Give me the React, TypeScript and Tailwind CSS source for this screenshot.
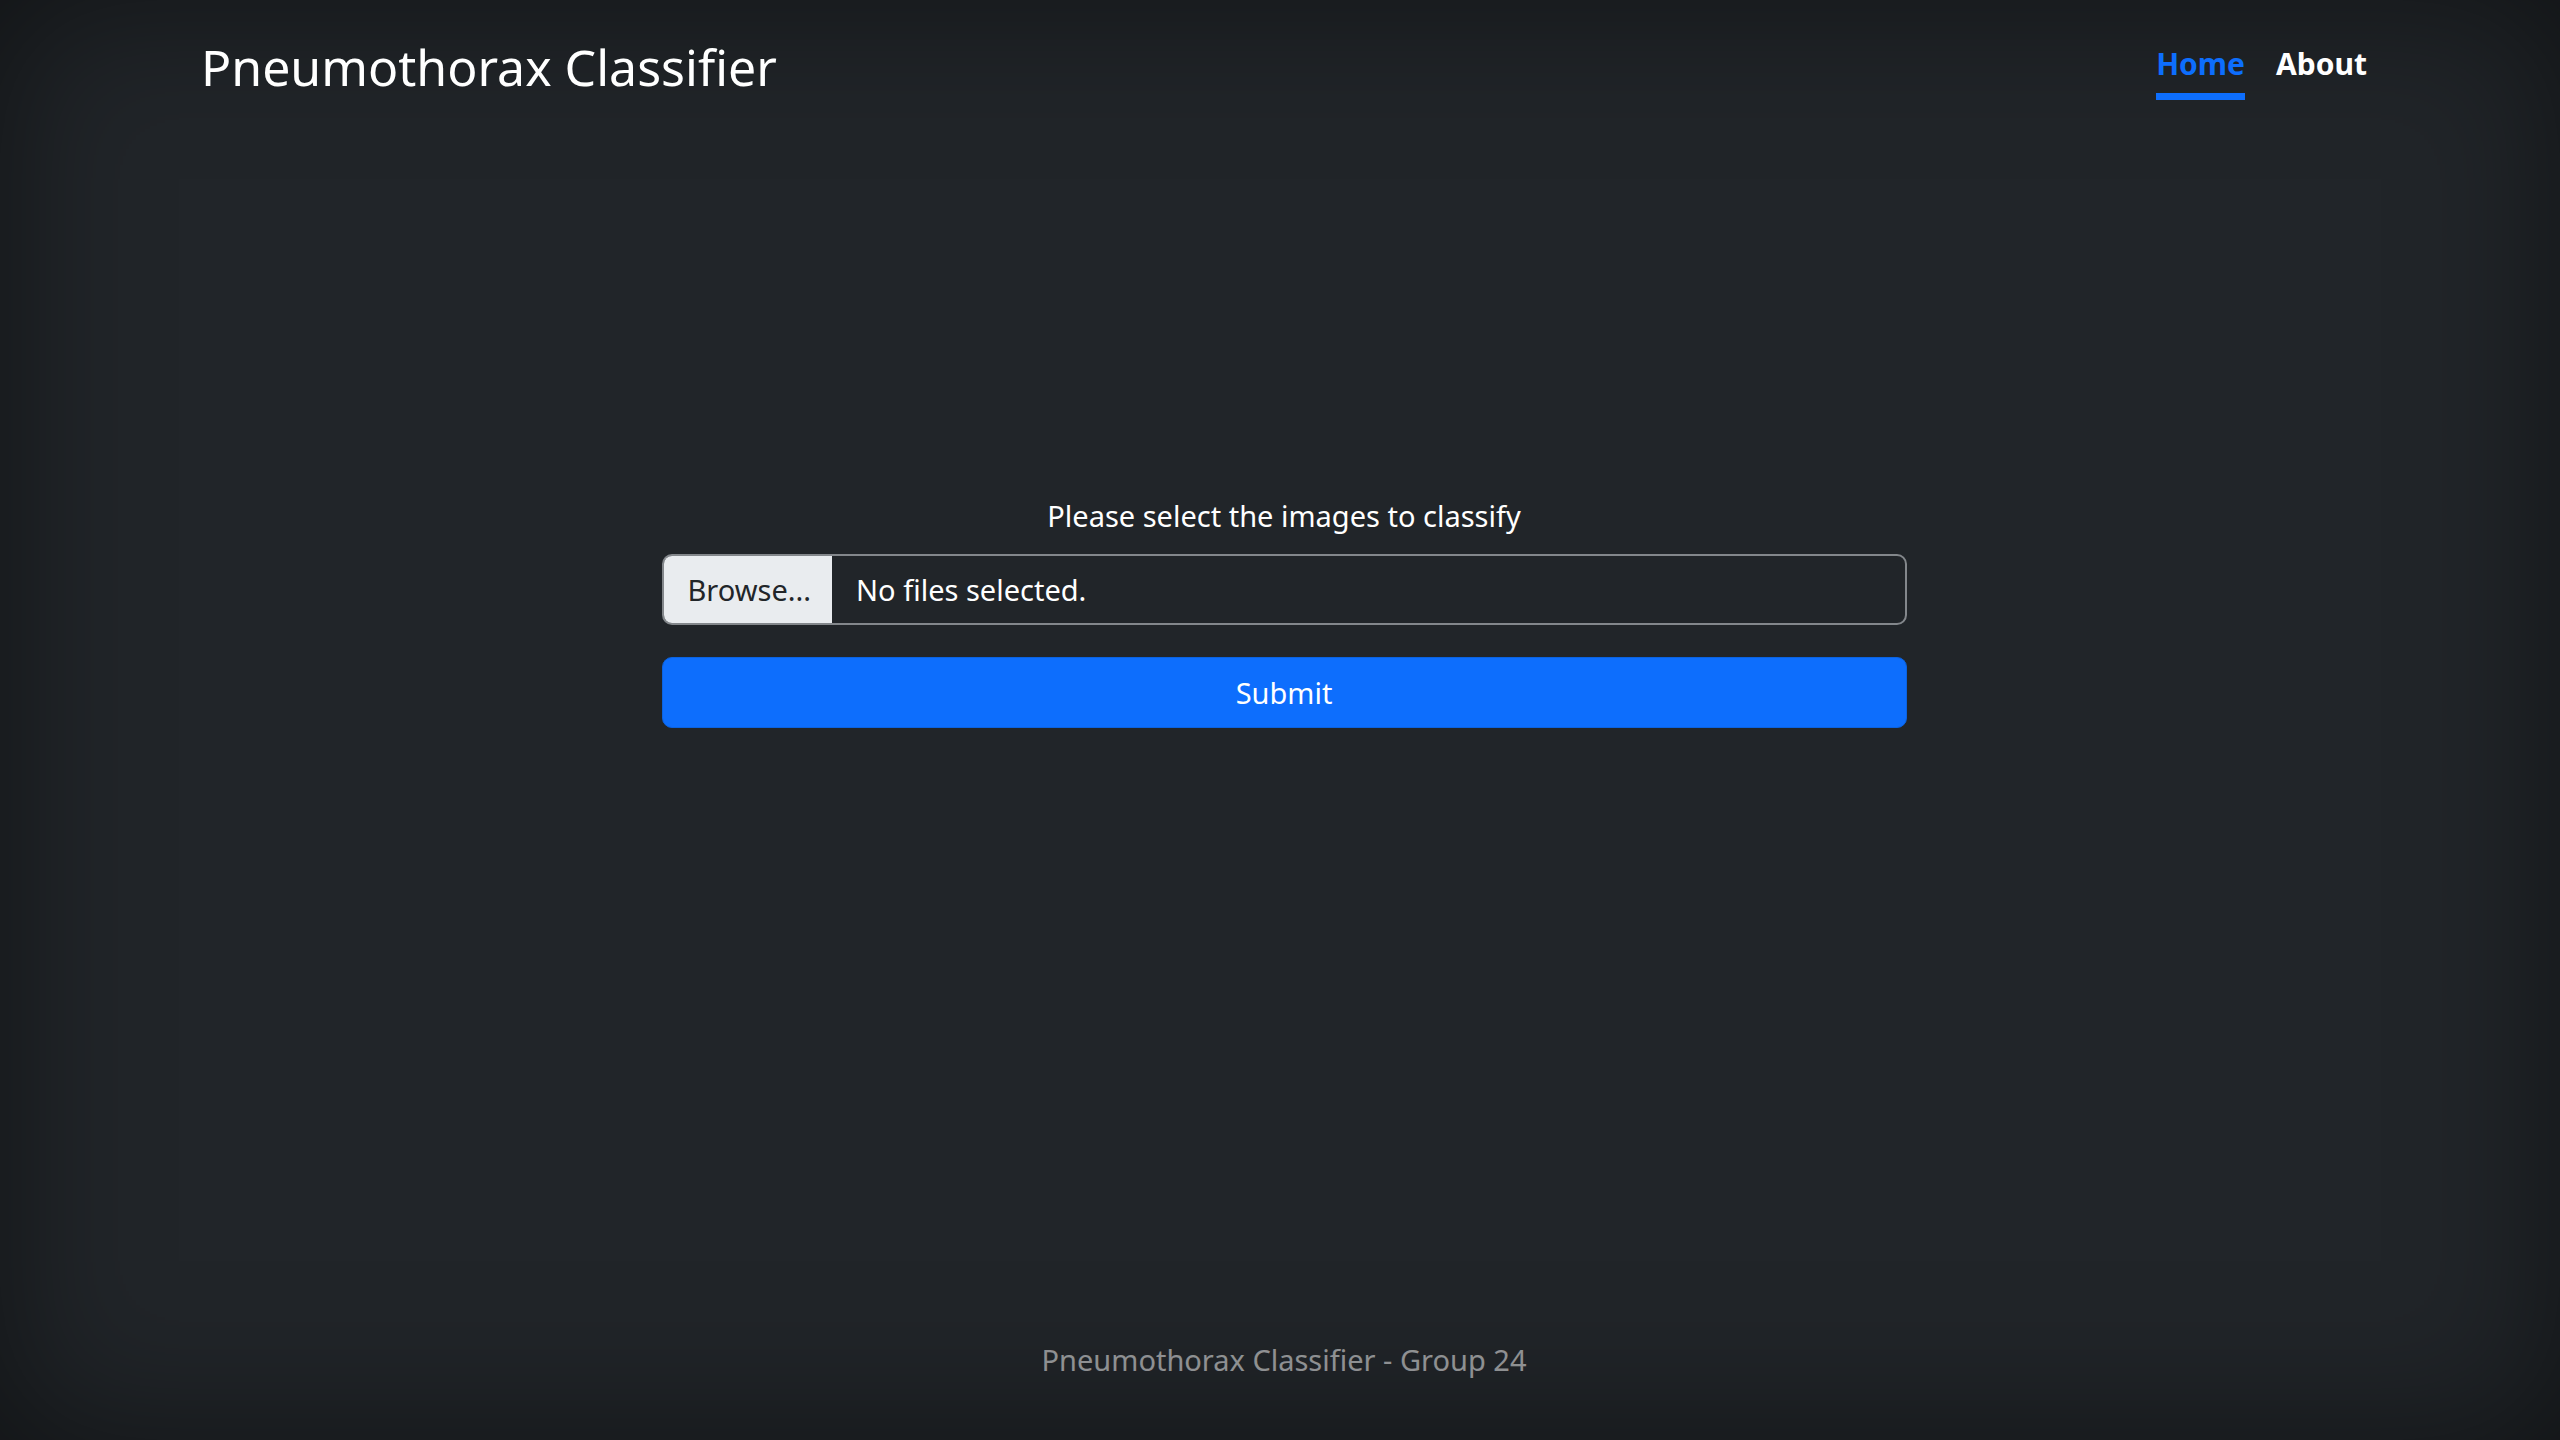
import React from 'react';

export default function App() {
  return (
    <div className="h-screen w-full flex flex-col bg-[#212529] shadow-[inset_0_0_150px_rgba(0,0,0,0.5)] pl-[201px] pr-[193px] text-white font-['Noto_Sans',sans-serif]">
      <header className="flex justify-between items-start pt-[34px]">
        <h3 className="pt-[3px] text-[50px] leading-[60px] font-normal">Pneumothorax Classifier</h3>
        <nav className="flex items-start gap-[31px]">
          <a href="#" className="py-[7px] text-[30px] leading-[45px] font-bold text-[#0d6efd] border-b-[7px] border-[#0d6efd]">
            Home
          </a>
          <a href="#" className="py-[7px] text-[30px] leading-[45px] font-bold text-white border-b-[7px] border-transparent">
            About
          </a>
        </nav>
      </header>

      <main className="mt-[394px] w-[1245px] mx-auto">
        <p className="text-center text-[29px] leading-[44px]">Please select the images to classify</p>
        <div className="mt-[16px] flex h-[71px] border-2 border-[#83878b] rounded-[10px] overflow-hidden">
          <span className="flex items-center bg-[#e9ecef] text-[#212529] pl-[24px] pr-[21px] text-[29px] leading-[44px]">
            Browse...
          </span>
          <span className="flex items-center pl-[24px] text-[29px] leading-[44px]">No files selected.</span>
        </div>
        <button className="mt-[32px] w-full h-[71px] rounded-[10px] bg-[#0d6efd] border border-[#0b63e0] text-white text-[29px] leading-[44px]">
          Submit
        </button>
      </main>

      <footer className="mt-auto pb-[58px] text-center text-[29px] leading-[44px] text-white/50">
        Pneumothorax Classifier - Group 24
      </footer>
    </div>
  );
}
